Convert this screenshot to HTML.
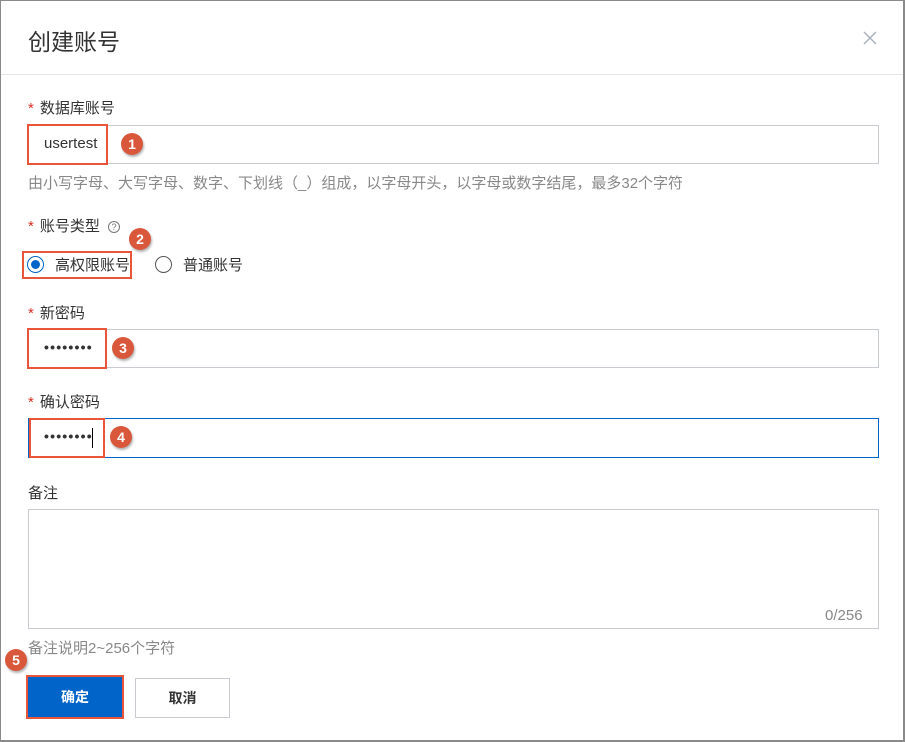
<!DOCTYPE html>
<html><head><meta charset="utf-8"><style>
*{margin:0;padding:0;box-sizing:border-box}
body{width:905px;height:742px;background:#fff;position:relative;overflow:hidden;font-family:"Liberation Sans","Noto Sans CJK SC",sans-serif;color:#333}
.frame{position:absolute;left:0;top:0;width:905px;height:742px;border:1px solid #8a8a8a;border-right-width:2px;border-bottom-width:2px;pointer-events:none;z-index:9}
.a{position:absolute}
.lbl{font-size:15px;color:#333}
.lbl b{color:#d93026;font-weight:normal;margin-right:6px}
.inp{position:absolute;left:28px;width:851px;border:1px solid #c8cbd0;background:#fff}
.help{font-size:15px;color:#888}
.red{position:absolute;border:2px solid #e8553b}
.badge{position:absolute;width:22px;height:22px;border-radius:50%;background:#d9583b;color:#fff;font-weight:bold;font-size:14px;text-align:center;line-height:22px;box-shadow:1px 2px 2px rgba(0,0,0,.3)}
.dots{font-size:14px;letter-spacing:1.2px;color:#333;font-weight:bold}
</style></head><body>
<div class="frame"></div>
<div class="a" style="left:28px;top:23px;font-size:23px;color:#333">创建账号</div>
<svg class="a" style="left:862px;top:30px" width="16" height="16"><path d="M2 2L14 14M14 2L2 14" stroke="#a9b2bd" stroke-width="1.5"/></svg>
<div class="a" style="left:0;top:74px;width:905px;height:1px;background:#e5e5e5"></div>

<div class="a lbl" style="left:28px;top:97px"><b>*</b>数据库账号</div>
<div class="inp" style="top:125px;height:39px"></div>
<div class="a" style="left:44px;top:135px;font-size:15px;color:#333">usertest</div>
<div class="red" style="left:27px;top:124px;width:81px;height:41px"></div>
<div class="badge" style="left:121px;top:133px">1</div>
<div class="a help" style="left:28px;top:172px">由小写字母、大写字母、数字、下划线（_）组成，以字母开头，以字母或数字结尾，最多32个字符</div>

<div class="a lbl" style="left:28px;top:215px"><b>*</b>账号类型 <span style="display:inline-block;width:12px;height:12px;border:1px solid #777;border-radius:50%;font-size:9px;line-height:10px;text-align:center;color:#777;margin-left:4px;vertical-align:1px">?</span></div>
<div class="badge" style="left:129px;top:228px">2</div>
<div class="a" style="left:27px;top:256px;width:17px;height:17px;border:1px solid #0064c8;border-radius:50%"><div style="position:absolute;left:3px;top:3px;width:9px;height:9px;border-radius:50%;background:#0064c8"></div></div>
<div class="a" style="left:55px;top:254px;font-size:15px;color:#333">高权限账号</div>
<div class="red" style="left:22px;top:251px;width:110px;height:28px"></div>
<div class="a" style="left:155px;top:256px;width:17px;height:17px;border:1px solid #555;border-radius:50%"></div>
<div class="a" style="left:183px;top:254px;font-size:15px;color:#333">普通账号</div>

<div class="a lbl" style="left:28px;top:302px"><b>*</b>新密码</div>
<div class="inp" style="top:329px;height:39px"></div>
<div class="a dots" style="left:44px;top:339px">••••••••</div>
<div class="red" style="left:27px;top:328px;width:80px;height:41px"></div>
<div class="badge" style="left:112px;top:337px">3</div>

<div class="a lbl" style="left:28px;top:391px"><b>*</b>确认密码</div>
<div class="inp" style="top:418px;height:40px;border-color:#0064c8"></div>
<div class="a dots" style="left:44px;top:428px">••••••••</div>
<div class="a" style="left:92px;top:428px;width:1px;height:20px;background:#000"></div>
<div class="red" style="left:29px;top:418px;width:76px;height:40px"></div>
<div class="badge" style="left:110px;top:426px">4</div>

<div class="a lbl" style="left:28px;top:482px">备注</div>
<div class="inp" style="top:509px;height:120px"></div>
<div class="a" style="left:825px;top:607px;font-size:15px;color:#888">0/256</div>
<div class="a help" style="left:28px;top:637px">备注说明2~256个字符</div>

<div class="badge" style="left:5px;top:649px">5</div>
<div class="a" style="left:28px;top:677px;width:94px;height:40px;background:#0064c8;color:#fff;font-size:14px;font-weight:bold;text-align:center;line-height:40px">确定</div>
<div class="red" style="left:26px;top:675px;width:98px;height:44px"></div>
<div class="a" style="left:135px;top:678px;width:95px;height:40px;border:1px solid #c8cbd0;color:#333;font-size:14px;font-weight:bold;text-align:center;line-height:38px">取消</div>
</body></html>
